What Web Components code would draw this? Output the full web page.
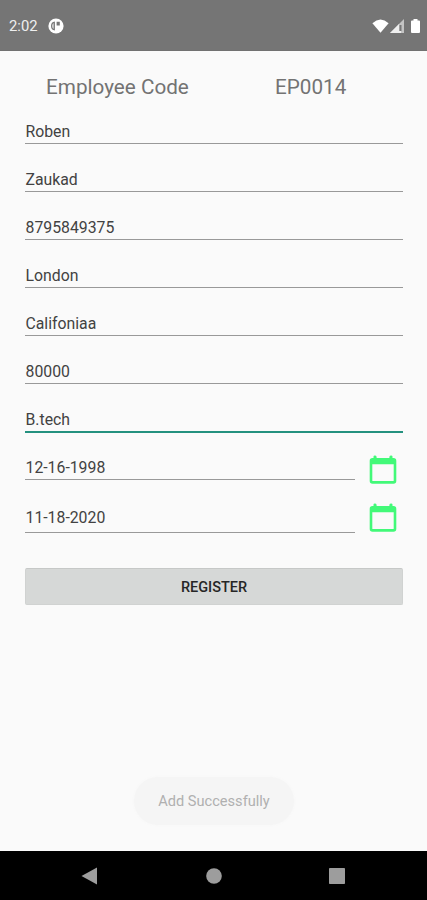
<!DOCTYPE html>
<html lang="en">
<head>
<meta charset="utf-8">
<title>Employee registration</title>
<style>
html, body { margin: 0; height: 100%; }
body { font-family: Roboto, "Liberation Sans", sans-serif; background: #fafafa; overflow: hidden; }
</style>
</head>
<body>
<employee-screen></employee-screen>
<script>
function define(name, html) {
  const template = document.createElement('template');
  template.innerHTML = html;
  customElements.define(name, class extends HTMLElement {
    constructor() {
      super();
      this.attachShadow({ mode: 'open' }).append(template.content.cloneNode(true));
    }
  });
}

define('status-bar', `
<style>
:host { display: flex; align-items: center; box-sizing: border-box; height: 51px; padding: 2px 7px 0 9px; background: #757575; color: #efefef; font-size: 14.8px; border-bottom: 1px solid #717171; }
svg { display: block; fill: #fff; }
.app { margin-left: 10.5px; }
.wifi { margin-left: auto; }
.signal { margin-left: 1px; }
.battery { margin-left: 7px; }
</style>
<span>2:02</span>
<svg class="app" width="16" height="16" viewBox="0 0 16 16"><circle cx="8" cy="8" r="7.6"/><path d="M6.900 3.400V12.400Q3 12 3 7.900T6.900 3.400zM8.600 3.800h3.200v3.600H8.600z" fill="#777"/><path d="M5.500 5v6Q4.300 10 4.300 8T5.500 5z"/></svg>
<svg class="wifi" width="17" height="14" viewBox="0 0 17 14"><path d="M.4 4.2Q8.5-3.200 16.600 4.200L8.500 13.700z"/></svg>
<svg class="signal" width="14" height="14" viewBox="0 0 14 14"><path d="M0 14 14 0v14z" fill="#c4c4c4"/><path d="M0 14 9 5v7h2v2z" fill="#eee"/><path d="M9.500 6h2v6h-2z" fill="#777"/></svg>
<svg class="battery" width="9" height="14" viewBox="0 0 9 14"><path d="M2.500 0h4v1.500H8q1 0 1 1V13q0 1-1 1H1q-1 0-1-1V2.500q0-1 1-1h1.500z"/></svg>
`);

define('code-header', `
<style>
:host { display: grid; grid-template-columns: 229px 1fr; box-sizing: border-box; height: 45px; padding: 23px 0 0 46px; color: #737373; font-size: 20.7px; line-height: 26px; }
</style>
<slot name="label"></slot><slot name="value"></slot>
`);

define('text-field', `
<style>
:host { display: flex; flex: 1; align-items: flex-end; box-sizing: border-box; height: 48px; padding: 0 0 2px .5px; border-bottom: 1px solid #999; color: #424242; font-size: 15.8px; line-height: 19px; }
:host([focused]) { border-bottom: 2px solid #24917f; padding-bottom: 2px; height: 49px; margin-bottom: -1px; }
</style>
<slot></slot>
`);

define('date-field', `
<style>
:host { display: flex; height: 48px; }
text-field { height: 100%; padding-bottom: var(--text-gap, 2px); }
svg { display: block; flex: none; margin: 23px 6px 0 14px; }
</style>
<text-field><slot></slot></text-field>
<svg width="28" height="30" viewBox="0 0 28 30"><path fill="#42f978" fill-rule="evenodd" d="M4.500 3V1.500Q4.500.5 5.900.5T7.600 1.800V3H20.400V1.800Q20.700.5 22.100.5T23.500 1.500V3H24.500Q27.300 3 27.300 5.800V26Q27.300 28.800 24.500 28.800H3.500Q.7 28.800 .7 26V5.800Q.7 3 3.500 3zM3.300 9.300V25.400Q3.300 26.100 4 26.100H24Q24.700 26.100 24.700 25.400V9.300z"/></svg>
`);

define('action-button', `
<style>
:host { display: block; }
button { display: block; width: 100%; height: 37px; padding: 2px 0 0; border: 1px solid #d0d2d1; border-top-color: #c6c8c7; border-radius: 2px; background: #d6d8d7; color: #262626; font: 500 14.500px/18px Roboto, "Liberation Sans", sans-serif; }
</style>
<button><slot></slot></button>
`);

define('toast-message', `
<style>
:host { position: absolute; left: 134px; top: 777px; display: flex; align-items: center; justify-content: center; width: 160px; height: 48px; border-radius: 24px; background: #f5f5f5; box-shadow: 0 0 3px #f6f6f6; color: #b0b0b0; font-size: 14.600px; }
</style>
<slot></slot>
`);

define('nav-bar', `
<style>
:host { display: flex; align-items: center; justify-content: space-between; box-sizing: border-box; height: 49px; padding: 0 82px 0 81px; background: #000; }
svg { display: block; fill: #9d9d9d; }
</style>
<svg width="17" height="18" viewBox="0 0 17 18"><path d="M.5 9 16 .5v17z"/></svg>
<svg width="16" height="16" viewBox="0 0 16 16"><circle cx="8" cy="8" r="7.8"/></svg>
<svg width="16" height="16" viewBox="0 0 16 16"><rect width="16" height="16" rx=".8"/></svg>
`);

define('employee-screen', `
<style>
:host { display: flex; flex-direction: column; position: relative; height: 900px; width: 427px; background: #fafafa; }
main { flex: 1; }
form { display: flex; flex-direction: column; margin: 0 24px 0 25px; }
text-field { flex: none; }
.joined { height: 53px; --text-gap: 5px; }
action-button { margin-top: 35px; }
</style>
<status-bar></status-bar>
<main>
  <code-header><span slot="label">Employee Code</span><span slot="value">EP0014</span></code-header>
  <form>
    <text-field>Roben</text-field>
    <text-field>Zaukad</text-field>
    <text-field>8795849375</text-field>
    <text-field>London</text-field>
    <text-field>Califoniaa</text-field>
    <text-field>80000</text-field>
    <text-field focused>B.tech</text-field>
    <date-field>12-16-1998</date-field>
    <date-field class="joined">11-18-2020</date-field>
    <action-button>REGISTER</action-button>
  </form>
</main>
<toast-message>Add Successfully</toast-message>
<nav-bar></nav-bar>
`);
</script>
</body>
</html>
